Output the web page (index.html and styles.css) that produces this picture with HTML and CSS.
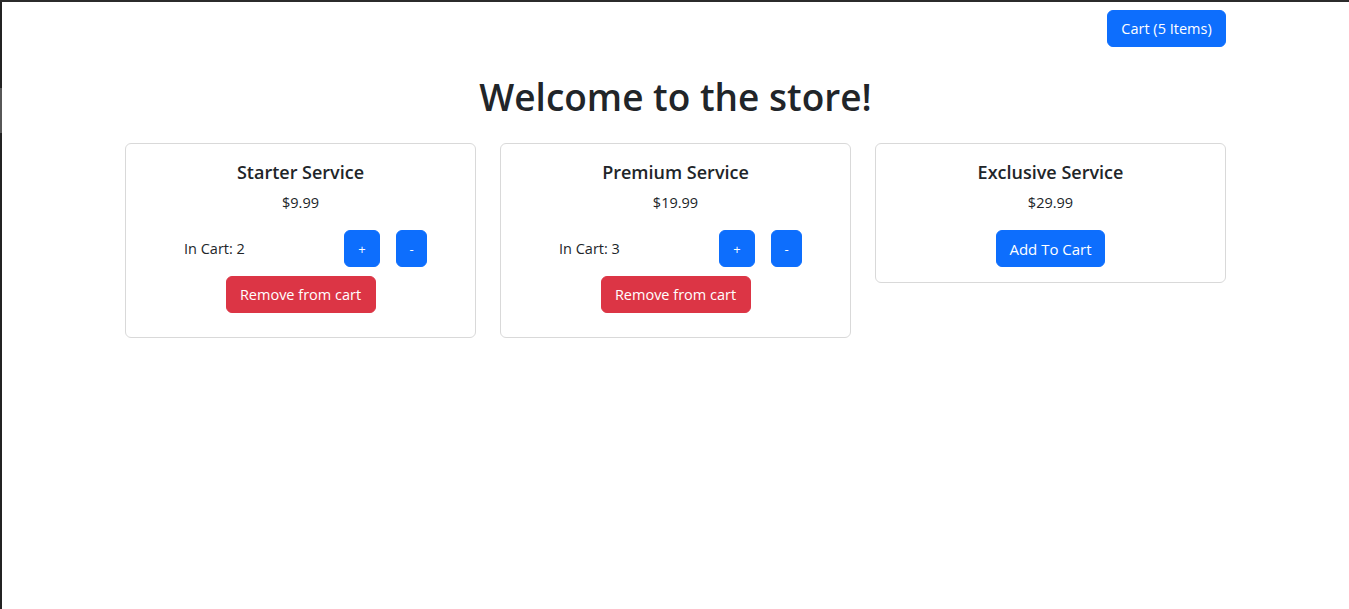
FILE: index.html
```html
<!DOCTYPE html>
<html lang="en">
<head>
<meta charset="utf-8">
<title>Store</title>
<link rel="stylesheet" href="styles.css">
</head>
<body>
<div class="page">
  <div class="topbar">
    <button class="btn btn-primary cart-btn">Cart (5 Items)</button>
  </div>
  <h1 class="title">Welcome to the store!</h1>
  <div class="cards">
    <div class="card">
      <h5 class="card-title">Starter Service</h5>
      <p class="price">$9.99</p>
      <div class="qty-row">
        <span class="in-cart">In Cart: 2</span>
        <button class="btn btn-primary btn-plus">+</button>
        <button class="btn btn-primary btn-minus">-</button>
      </div>
      <button class="btn btn-danger remove-btn">Remove from cart</button>
    </div>
    <div class="card">
      <h5 class="card-title">Premium Service</h5>
      <p class="price">$19.99</p>
      <div class="qty-row">
        <span class="in-cart">In Cart: 3</span>
        <button class="btn btn-primary btn-plus">+</button>
        <button class="btn btn-primary btn-minus">-</button>
      </div>
      <button class="btn btn-danger remove-btn">Remove from cart</button>
    </div>
    <div class="card card-short">
      <h5 class="card-title">Exclusive Service</h5>
      <p class="price">$29.99</p>
      <button class="btn btn-primary add-btn">Add To Cart</button>
    </div>
  </div>
</div>
</body>
</html>
```
FILE: styles.css
```css
html, body {
  margin: 0;
  padding: 0;
  height: 100%;
}
body {
  background: #fff;
  border-top: 2px solid #2b2b2b;
  box-sizing: border-box;
  padding-left: 2px;
  background-image: linear-gradient(to bottom, #232323 0, #232323 88px, #575757 88px, #575757 133px, #232323 133px);
  background-size: 2px 100%;
  background-repeat: no-repeat;
  font-family: "Open Sans", "Noto Sans", sans-serif;
  color: #212529;
  font-size: 15px;
}
.page {
  width: 1101px;
  margin: 0 auto;
}
.topbar {
  display: flex;
  justify-content: flex-end;
  padding-top: 8px;
}
.btn {
  font-family: "Open Sans", "Noto Sans", sans-serif;
  font-size: 15px;
  line-height: 22px;
  height: 37px;
  padding: 0 12px;
  border-radius: 6px;
  border: 1px solid transparent;
  color: #fff;
  cursor: pointer;
  display: inline-flex;
  align-items: center;
  justify-content: center;
  white-space: nowrap;
}
.btn-primary {
  background: #0d6efd;
  border-color: #0d6efd;
}
.btn-danger {
  background: #dc3545;
  border-color: #dc3545;
}
.cart-btn {
  width: 119px;
  font-size: 14.5px;
}
.title {
  margin: 26px 0 0;
  height: 70px;
  font-size: 37px;
  font-weight: 600;
  line-height: 48px;
  text-align: center;
}
.cards {
  display: grid;
  grid-template-columns: repeat(3, 351px);
  gap: 24px;
  align-items: start;
}
.card {
  border: 1px solid #d9d9d9;
  border-radius: 6px;
  padding: 16px 16px 24px;
  display: flex;
  flex-direction: column;
  align-items: center;
}
.card-short {
  padding-bottom: 15px;
}
.card-title {
  margin: 0;
  font-size: 18px;
  font-weight: 600;
  line-height: 24px;
}
.price {
  margin: 8px 0 0;
  font-size: 14.5px;
  line-height: 22px;
  height: 22px;
}
.qty-row {
  align-self: stretch;
  display: flex;
  align-items: center;
  padding-left: 42px;
  margin-top: 16px;
}
.in-cart {
  width: 160px;
  font-size: 14.5px;
}
.btn-plus {
  width: 36px;
  padding: 0;
  font-size: 13px;
}
.btn-minus {
  width: 31px;
  padding: 0;
  margin-left: 16px;
  font-size: 13px;
}
.remove-btn {
  width: 150px;
  margin-top: 9px;
  font-size: 14.5px;
}
.add-btn {
  width: 109px;
  margin-top: 16px;
}
```
